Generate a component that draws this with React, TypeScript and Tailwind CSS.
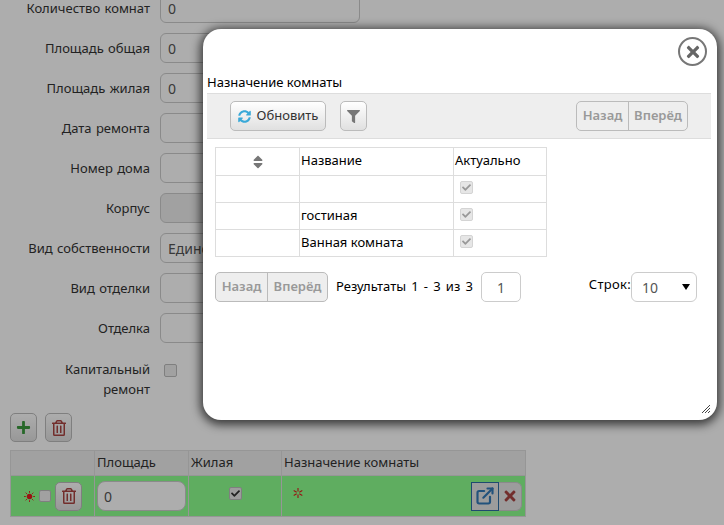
import { FaCheck, FaFilter, FaPlus, FaRegTrashAlt, FaSort, FaSyncAlt, FaTimes } from 'react-icons/fa'
import { FiExternalLink } from 'react-icons/fi'

const FONT = "font-['Noto_Sans','Open_Sans',sans-serif]"

const FIELDS = [
  { label: 'Количество комнат', value: '0', full: true },
  { label: 'Площадь общая', value: '0' },
  { label: 'Площадь жилая', value: '0' },
  { label: 'Дата ремонта', value: '' },
  { label: 'Номер дома', value: '' },
  { label: 'Корпус', value: '', disabled: true },
  { label: 'Вид собственности', value: 'Единоличная' },
  { label: 'Вид отделки', value: '' },
  { label: 'Отделка', value: '' },
]

const ROWS = ['', 'гостиная', 'Ванная комната']

function Check({ checked = true, muted = false }: { checked?: boolean; muted?: boolean }) {
  return (
    <span className={`inline-flex h-[13px] w-[13px] items-center justify-center rounded-[2px] border ${muted ? 'border-[#d4d4d4] bg-[#e6e6e6] text-[#999]' : 'border-[#bbb] bg-[#e8e8e8] text-[#333]'}`}>
      {checked && <FaCheck className="h-[9px] w-[9px]" />}
    </span>
  )
}

function Pager({ className = '' }: { className?: string }) {
  return (
    <div className={`flex h-[30px] rounded-[5px] border border-[#bbb] bg-[#eee] text-[13px] font-semibold text-[#999] ${className}`}>
      <span className="flex w-[52px] items-center justify-center border-r border-[#bbb]">Назад</span>
      <span className="flex flex-1 items-center justify-center">Вперёд</span>
    </div>
  )
}

function IconButton({ children, className = '' }: { children: React.ReactNode; className?: string }) {
  return (
    <button className={`flex items-center justify-center rounded-[5px] border border-[#bbb] bg-gradient-to-b from-white to-[#e0e0e0] ${className}`}>
      {children}
    </button>
  )
}

export default function App() {
  return (
    <div className={`relative h-[525px] w-[724px] overflow-hidden bg-white text-[13px] text-[#333] ${FONT}`}>
      {/* background form */}
      <div className="-mt-[7px] flex flex-col gap-[10px]">
        {FIELDS.map(f => (
          <div key={f.label} className="flex h-[30px] items-center">
            <label className="w-[150px] text-right leading-[20px] [word-spacing:1px]">{f.label}</label>
            <div className={`ml-[10px] flex h-[30px] w-[200px] items-center rounded-[6px] border border-[#ccc] px-[7px] text-[14px] text-[#555] ${f.disabled ? 'bg-[#eee]' : 'bg-white'}`}>
              {f.value}
            </div>
          </div>
        ))}
        <div className="mt-[6px] flex items-start">
          <label className="w-[150px] text-right leading-[20px]">Капитальный<br />ремонт</label>
          <span className="ml-[14px] mt-[5px] h-[13px] w-[13px] rounded-[2px] border border-[#bbb] bg-[#eee]" />
        </div>
      </div>

      <div className="ml-[10px] mt-[14px] flex gap-[8px]">
        <IconButton className="h-[29px] w-[27px] text-[#3c9a3f]"><FaPlus className="h-[15px] w-[15px]" /></IconButton>
        <IconButton className="h-[29px] w-[27px] text-[#a94442]"><FaRegTrashAlt className="h-[16px] w-[16px]" /></IconButton>
      </div>

      <table className="ml-[10px] mt-[8px] w-[516px] table-fixed border-collapse">
        <thead>
          <tr className="h-[25px] bg-[#eee] text-left">
            <th className="w-[84px] border border-[#ddd] font-normal" />
            <th className="w-[94px] border border-[#ddd] px-[2px] font-normal">Площадь</th>
            <th className="w-[93px] border border-[#ddd] px-[2px] font-normal">Жилая</th>
            <th className="border border-[#ddd] px-[2px] font-normal">Назначение комнаты</th>
          </tr>
        </thead>
        <tbody>
          <tr className="h-[41px] bg-[#8cff8e]">
            <td className="border border-[#ddd]">
              <div className="flex items-center justify-end gap-[4px] pr-[12px]">
                <svg viewBox="0 0 12 12" className="h-[11px] w-[11px] text-[#e21b1b]">
                  <circle cx="6" cy="6" r="3" fill="currentColor" />
                  <path d="M6 0v2M6 10v2M0 6h2M10 6h2M1.8 1.8l1.4 1.4M8.8 8.8l1.4 1.4M1.8 10.2l1.4-1.4M8.8 3.2l1.4-1.4" stroke="currentColor" strokeWidth="1" />
                </svg>
                <span className="h-[12px] w-[12px] rounded-[2px] border border-[#bbb] bg-[#eee]" />
                <IconButton className="h-[29px] w-[27px] text-[#a94442]"><FaRegTrashAlt className="h-[16px] w-[16px]" /></IconButton>
              </div>
            </td>
            <td className="border border-[#ddd] px-[2px]">
              <div className="flex h-[30px] w-[89px] items-center rounded-[8px] border border-[#ccc] bg-white px-[6px] text-[14px] text-[#555]">0</div>
            </td>
            <td className="border border-[#ddd] pb-[5px] text-center"><Check /></td>
            <td className="border border-[#ddd]">
              <div className="flex items-center justify-between pl-[11px] pr-[3px]">
                <svg viewBox="0 0 10 10" className="-mt-[6px] h-[10px] w-[10px] text-[#e21b1b]">
                  <path d="M5 0v3.5M5 6.5V10M0.7 2.5l3 1.7M6.3 5.8l3 1.7M0.7 7.5l3-1.7M6.3 4.2l3-1.7" stroke="currentColor" strokeWidth="1.1" />
                </svg>
                <div className="flex">
                  <button className="flex h-[29px] w-[28px] items-center justify-center border border-[#2e6da4] bg-[#e6e6e6] text-[#337ab7]"><FiExternalLink strokeWidth={2.6} className="h-[20px] w-[20px]" /></button>
                  <button className="flex h-[29px] w-[23px] items-center justify-center rounded-r-[6px] border border-l-0 border-[#ccc] bg-[#e6e6e6] text-[#a94442]"><FaTimes className="h-[16px] w-[16px]" /></button>
                </div>
              </div>
            </td>
          </tr>
        </tbody>
      </table>

      {/* dimmed backdrop */}
      <div className="absolute inset-0 bg-black/[0.32]" />

      {/* modal */}
      <div className="absolute left-[203px] top-[29px] h-[391px] w-[514px] rounded-[18px] bg-white text-black shadow-[0_2px_10px_3px_rgba(0,0,0,0.65)]">
        <div className="absolute right-[10px] top-[8px] flex h-[29px] w-[29px] items-center justify-center rounded-full border-2 border-[#777] text-[#666]">
          <FaTimes className="h-[18px] w-[18px]" />
        </div>

        <div className="pl-[4px] pt-[44px] text-[13px] leading-[18px]">Назначение комнаты</div>

        <div className="ml-[4px] mr-[6px] mt-[2px] flex h-[46px] items-center border-y border-[#ddd] bg-[#eee] pl-[23px] pr-[23px]">
          <button className="flex h-[30px] w-[96px] items-center justify-center gap-[6px] rounded-[5px] border border-[#bbb] bg-gradient-to-b from-white to-[#e0e0e0] text-[#333]">
            <FaSyncAlt className="h-[13px] w-[13px] text-[#3aa9d8]" />
            Обновить
          </button>
          <IconButton className="ml-[14px] h-[30px] w-[27px] text-[#777]"><FaFilter className="h-[13px] w-[13px]" /></IconButton>
          <Pager className="ml-auto w-[112px]" />
        </div>

        <table className="ml-[12px] mt-[8px] w-[332px] table-fixed border-collapse">
          <thead>
            <tr className="h-[28px] text-left">
              <th className="w-[84px] border border-[#ddd] text-center font-normal"><FaSort className="inline h-[16px] w-[16px] text-[#777]" /></th>
              <th className="w-[154px] border border-[#ddd] px-[1px] pb-[2px] font-normal">Название</th>
              <th className="border border-[#ddd] px-[1px] pb-[2px] font-normal">Актуально</th>
            </tr>
          </thead>
          <tbody>
            {ROWS.map(name => (
              <tr key={name} className="h-[27px]">
                <td className="border border-[#ddd]" />
                <td className="border border-[#ddd] px-[1px]">{name}</td>
                <td className="border border-[#ddd] pb-[3px] pl-[6px]"><Check muted /></td>
              </tr>
            ))}
          </tbody>
        </table>

        <div className="ml-[12px] mr-[20px] mt-[15px] flex items-center">
          <Pager className="w-[113px]" />
          <span className="ml-[8px] w-[137px] [word-spacing:1.8px]">Результаты 1 - 3 из 3</span>
          <div className="ml-[8px] flex h-[30px] w-[40px] items-center justify-center rounded-[5px] border border-[#ccc] text-[14px] text-[#555]">1</div>
          <span className="ml-auto -mt-[4px] tracking-[0.3px]">Строк:</span>
          <div className="flex h-[30px] w-[66px] items-center justify-between rounded-[6px] border border-[#ccc] pl-[10px] pr-[6px] text-[14px] text-[#555]">
            10
            <svg viewBox="0 0 8 6" className="h-[6px] w-[8px] text-black"><path d="M0 0h8L4 6z" fill="currentColor" /></svg>
          </div>
        </div>

        <svg viewBox="0 0 8 8" className="absolute bottom-[7px] right-[7px] h-[8px] w-[8px] text-[#444]">
          <path d="M8 0L0 8M8 3L3 8M8 6L6 8" stroke="currentColor" strokeWidth="1" />
        </svg>
      </div>
    </div>
  )
}
